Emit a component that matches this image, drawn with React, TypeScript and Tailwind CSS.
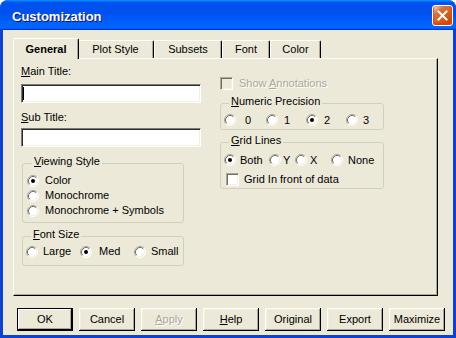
import React from "react";

const BG = "bg-[#ECE9D8]";

function Radio({ checked = false }: { checked?: boolean }) {
  return (
    <svg width="12" height="12" viewBox="0 0 12 12" className="shrink-0">
      <circle cx="6" cy="6" r="5" fill="#fff" />
      <path d="M2.11 9.89A5.5 5.5 0 0 1 9.89 2.11" fill="none" stroke="#ACA899" />
      <path d="M9.89 2.11A5.5 5.5 0 0 1 2.11 9.89" fill="none" stroke="#fff" />
      <path d="M2.82 9.18A4.5 4.5 0 0 1 9.18 2.82" fill="none" stroke="#716F64" />
      <path d="M9.18 2.82A4.5 4.5 0 0 1 2.82 9.18" fill="none" stroke="#F1EFE2" />
      {checked && <circle cx="6" cy="6" r="2" fill="#000" />}
    </svg>
  );
}

function Check({ disabled = false }: { disabled?: boolean }) {
  return (
    <div
      className={`h-[13px] w-[13px] shrink-0 border border-t-[#ACA899] border-l-[#ACA899] border-b-white border-r-white shadow-[inset_1px_1px_#716F64,inset_-1px_-1px_#F1EFE2] ${
        disabled ? "bg-[#ECE9D8]" : "bg-white"
      }`}
    />
  );
}

function Opt({
  label,
  checked,
  box,
  gap,
}: {
  label: React.ReactNode;
  checked?: boolean;
  box: string;
  gap: string;
}) {
  return (
    <div className={`flex items-center ${box}`}>
      <Radio checked={checked} />
      <span className={`${gap} leading-[13px]`}>{label}</span>
    </div>
  );
}

function U({ children }: { children: React.ReactNode }) {
  return <span className="underline underline-offset-[1px]">{children}</span>;
}

function Group({
  legend,
  className,
  children,
}: {
  legend: React.ReactNode;
  className: string;
  children: React.ReactNode;
}) {
  return (
    <div className={`rounded-[3px] border border-[#D0D0BF] ${className}`}>
      <div className={`-mt-[9px] ml-[5px] w-fit px-[2px] leading-[13px] ${BG}`}>{legend}</div>
      {children}
    </div>
  );
}

function Field({ caret = false }: { caret?: boolean }) {
  return (
    <div className="flex h-[19px] w-[180px] items-center border border-t-[#7F7D71] border-l-[#7F7D71] border-b-white border-r-white bg-white shadow-[inset_1px_1px_#2A2A2A,inset_-1px_-1px_#F1EFE2]">
      {caret && <div className="ml-[1px] h-[13px] w-[1px] bg-black" />}
    </div>
  );
}

const TABS = [
  { label: "General", w: "w-[66px]", active: true },
  { label: "Plot Style", w: "w-[77px]" },
  { label: "Subsets", w: "w-[68px]" },
  { label: "Font", w: "w-[48px]" },
  { label: "Color", w: "w-[51px]" },
];

function Tabs() {
  return (
    <div className="relative z-10 -mb-[1px] flex h-[21px] items-end pl-[2px]">
      {TABS.map((t) =>
        t.active ? (
          <div
            key={t.label}
            className={`relative z-10 -mx-[2px] h-[21px] ${t.w} rounded-t-[2px] border-l border-t border-r border-l-white border-t-white border-r-black pt-[4px] text-center font-bold leading-[13px] shadow-[inset_-1px_0_#ACA899] ${BG}`}
          >
            {t.label}
          </div>
        ) : (
          <div
            key={t.label}
            className={`mb-[1px] h-[18px] ${t.w} rounded-t-[2px] border-l border-t border-r border-l-white border-t-white border-r-black pt-[2px] text-center leading-[13px] shadow-[inset_-1px_0_#ACA899] ${BG}`}
          >
            {t.label}
          </div>
        )
      )}
    </div>
  );
}

function Btn({
  children,
  def = false,
  disabled = false,
}: {
  children: React.ReactNode;
  def?: boolean;
  disabled?: boolean;
}) {
  return (
    <div
      className={`flex h-[23px] w-[56px] items-center justify-center leading-[13px] ${BG} ${
        def
          ? "border border-black shadow-[inset_-1px_-1px_#000,inset_1px_1px_#fff,inset_-2px_-2px_#ACA899]"
          : "shadow-[inset_-1px_-1px_#000,inset_1px_1px_#fff,inset_-2px_-2px_#ACA899,inset_2px_2px_#F1EFE2]"
      } ${disabled ? "text-[#ACA899] [text-shadow:1px_1px_0_#fff]" : "text-black"}`}
    >
      {children}
    </div>
  );
}

function TitleBar() {
  return (
    <div className="flex h-[30px] shrink-0 items-start bg-[linear-gradient(180deg,#0997ff,#0053ee_8%,#0050ee_40%,#06f_88%,#06f_93%,#005bff_95%,#0035d5_96%,#0035d5)]">
      <div className="ml-[12px] mt-[9px] text-[13px] font-bold leading-[15px] text-white [text-shadow:1px_1px_#0f1089]">
        Customization
      </div>
      <div className="ml-auto mr-[3px] mt-[5px] flex h-[21px] w-[21px] items-center justify-center rounded-[3px] border border-white bg-[radial-gradient(circle_at_90%_90%,#cc4600_0%,#dc6527_55%,#cd7546_70%,#ffccb2_90%,#fff_100%)] shadow-[inset_0_-1px_2px_1px_#da4600]">
        <svg width="11" height="11" viewBox="0 0 11 11">
          <path d="M1.5 1.5L9.5 9.5M9.5 1.5L1.5 9.5" stroke="#fff" strokeWidth="2" strokeLinecap="square" />
        </svg>
      </div>
    </div>
  );
}

export default function App() {
  return (
    <div className="flex h-[338px] w-[456px] flex-col overflow-hidden rounded-t-[8px] bg-[#0B43D5] font-['Liberation_Sans',Arial,sans-serif] text-[11px] text-black">
      <TitleBar />
      <div className={`mx-[3px] mb-[3px] flex flex-1 flex-col pl-[10px] pt-[8px] ${BG}`}>
        <Tabs />
        <div className="flex h-[238px] w-[425px] border border-t-white border-l-white border-r-black border-b-black pl-[7px] pt-[6px] shadow-[inset_-1px_-1px_#ACA899]">
          {/* left column */}
          <div className="flex w-[180px] flex-col">
            <div className="h-[13px] leading-[13px]">
              <U>M</U>ain Title:
            </div>
            <div className="mt-[6px]">
              <Field caret />
            </div>
            <div className="mt-[8px] h-[13px] leading-[13px]">
              <U>S</U>ub Title:
            </div>
            <div className="mt-[4px]">
              <Field />
            </div>
            <Group
              legend={
                <>
                  <U>V</U>iewing Style
                </>
              }
              className="ml-[1px] mt-[16px] w-[162px] pb-[4px] pl-[4px]"
            >
              <div className="mt-[5px] flex flex-col">
                <Opt label="Color" checked box="h-[15px]" gap="ml-[6px]" />
                <Opt label="Monochrome" box="h-[15px]" gap="ml-[6px]" />
                <Opt label="Monochrome + Symbols" box="h-[15px]" gap="ml-[6px]" />
              </div>
            </Group>
            <Group
              legend={
                <>
                  <U>F</U>ont Size
                </>
              }
              className="ml-[1px] mt-[13px] w-[162px] pb-[6px] pl-[3px]"
            >
              <div className="mt-[3px] flex h-[15px]">
                <Opt label="Large" box="w-[55px]" gap="ml-[5px]" />
                <Opt label="Med" checked box="w-[55px]" gap="ml-[7px]" />
                <Opt label="Small" box="w-[50px]" gap="ml-[5px]" />
              </div>
            </Group>
          </div>

          {/* right column */}
          <div className="ml-[19px] flex w-[164px] flex-col">
            <div className="mt-[12px] flex h-[13px] items-center">
              <Check disabled />
              <span className="ml-[6px] leading-[13px] text-[#ACA899] [text-shadow:1px_1px_0_#fff]">
                Show <U>A</U>nnotations
              </span>
            </div>
            <Group
              legend={
                <>
                  <U>N</U>umeric Precision
                </>
              }
              className="mt-[13px] w-[164px] pb-[2px] pl-[3px]"
            >
              <div className="mt-[5px] flex h-[14px]">
                <Opt label="0" box="w-[42px]" gap="ml-[9px]" />
                <Opt label="1" box="w-[40px]" gap="ml-[6px]" />
                <Opt label="2" checked box="w-[40px]" gap="ml-[6px]" />
                <Opt label="3" box="w-[30px]" gap="ml-[5px]" />
              </div>
            </Group>
            <Group
              legend={
                <>
                  <U>G</U>rid Lines
                </>
              }
              className="mt-[12px] w-[164px] pb-[2px] pl-[3px]"
            >
              <div className="mt-[6px] flex h-[14px]">
                <Opt label="Both" checked box="w-[45px]" gap="ml-[4px]" />
                <Opt label="Y" box="w-[26px]" gap="ml-[2px]" />
                <Opt label="X" box="w-[36px]" gap="ml-[3px]" />
                <Opt label="None" box="w-[45px]" gap="ml-[5px]" />
              </div>
              <div className="mt-[6px] flex h-[13px] items-center pl-[2px]">
                <Check />
                <span className="ml-[5px] leading-[13px]">Grid In front of data</span>
              </div>
            </Group>
          </div>
        </div>

        <div className="ml-[4px] mt-[12px] flex gap-[6px]">
          <Btn def>OK</Btn>
          <Btn>Cancel</Btn>
          <Btn disabled>
            <U>A</U>pply
          </Btn>
          <Btn>
            <U>H</U>elp
          </Btn>
          <Btn>Original</Btn>
          <Btn>Export</Btn>
          <Btn>Maximize</Btn>
        </div>
      </div>
    </div>
  );
}
